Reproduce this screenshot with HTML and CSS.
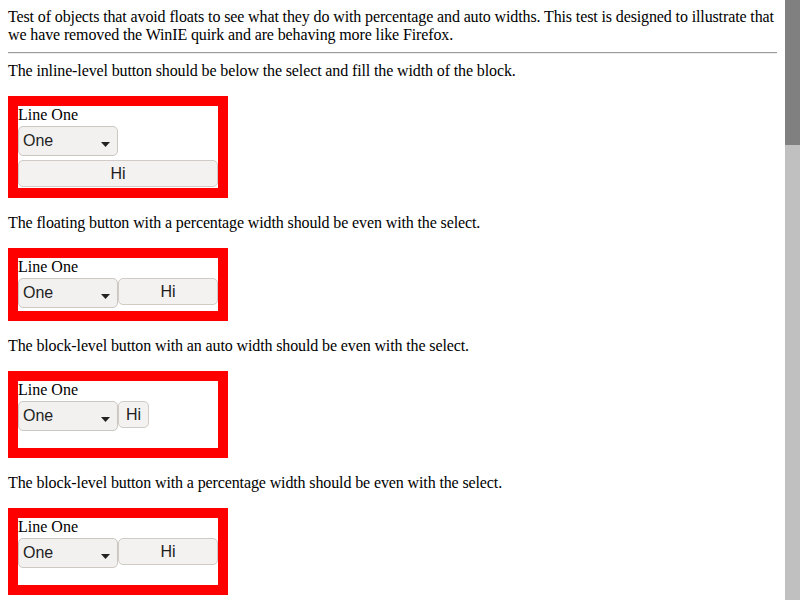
FILE: index.html
```html
<!DOCTYPE html>
<html>
<head>
<meta charset="utf-8">
<title>Objects avoiding floats</title>
<link rel="stylesheet" href="styles.css">
</head>
<body>
<p class="intro">Test of objects that avoid floats to see what they do with percentage and auto widths. This test is designed to illustrate that we have removed the WinIE quirk and are behaving more like Firefox.</p>
<hr class="rule">

<div class="desc">The inline-level button should be below the select and fill the width of the block.</div>
<div class="box box-stack">
  <div class="label">Line One</div>
  <select class="sel"><option>One</option></select>
  <button class="btn btn-full">Hi</button>
</div>

<div class="desc">The floating button with a percentage width should be even with the select.</div>
<div class="box box-float">
  <div class="label">Line One</div>
  <div class="row">
    <select class="sel"><option>One</option></select>
    <button class="btn btn-half">Hi</button>
  </div>
</div>

<div class="desc">The block-level button with an auto width should be even with the select.</div>
<div class="box box-block">
  <div class="label">Line One</div>
  <div class="row">
    <select class="sel"><option>One</option></select>
    <button class="btn btn-auto">Hi</button>
  </div>
</div>

<div class="desc">The block-level button with a percentage width should be even with the select.</div>
<div class="box box-block">
  <div class="label">Line One</div>
  <div class="row">
    <select class="sel"><option>One</option></select>
    <button class="btn btn-half">Hi</button>
  </div>
</div>

<div class="scrollbar" aria-hidden="true"><div class="scrollbar-thumb"></div></div>
</body>
</html>
```

FILE: styles.css
```css
html {
  overflow: hidden;
}

body {
  margin: 8px 23px 8px 8px;
  font-family: "Liberation Serif", "Times New Roman", serif;
  font-size: 16px;
  line-height: 18px;
  color: #000;
  background: #fff;
}

.scrollbar {
  position: fixed;
  top: 0;
  right: 0;
  width: 15px;
  height: 100vh;
  background: #c0c0c0;
}

.scrollbar-thumb {
  height: 145px;
  background: #808080;
}

.intro {
  margin: 0;
  letter-spacing: -0.12px;
}

.rule {
  margin: 8px 0;
  border: 0;
  border-top: 1px solid #9a9a9a;
  border-bottom: 1px solid #eeeeee;
  height: 0;
}

.desc {
  margin: 0;
  letter-spacing: -0.12px;
}

.box {
  width: 200px;
  border: 10px solid #ff0000;
  margin: 16px 0;
}

.label {
  line-height: 18px;
  height: 18px;
}

.row {
  display: flex;
  align-items: flex-start;
}

.sel {
  -webkit-appearance: none;
  appearance: none;
  display: block;
  box-sizing: border-box;
  width: 100px;
  height: 30px;
  margin: 2px 0 0 0;
  padding: 0 0 0 4px;
  border: 1px solid #cdc7c2;
  border-radius: 5px;
  background-color: #f2f1f0;
  background-image: url("data:image/svg+xml,%3Csvg xmlns='http://www.w3.org/2000/svg' width='9' height='5' viewBox='0 0 9 5'%3E%3Cpath d='M0 0H9L4.5 5Z' fill='%23222222'/%3E%3C/svg%3E");
  background-repeat: no-repeat;
  background-position: 82px 15px;
  background-size: 9px 5px;
  font-family: "Liberation Sans", Arial, sans-serif;
  font-size: 16px;
  line-height: 28px;
  color: #1e1e1e;
}

.btn {
  -webkit-appearance: none;
  appearance: none;
  display: block;
  box-sizing: border-box;
  height: 27px;
  margin: 0;
  padding: 0 7px;
  border: 1px solid #d0cbc6;
  border-radius: 5px;
  background: #f3f2f1;
  font-family: "Liberation Sans", Arial, sans-serif;
  font-size: 16px;
  line-height: 25px;
  color: #1e1e1e;
  text-align: center;
}

.box-stack .sel {
  margin-bottom: 4px;
}

.btn-full {
  width: 200px;
  margin-bottom: 1px;
}

.row .btn {
  margin-top: 2px;
}

.btn-half {
  width: 100px;
}

.btn-auto {
  width: auto;
}

.box-float {
  padding-bottom: 3px;
}

.box-block {
  padding-bottom: 17px;
}
```
